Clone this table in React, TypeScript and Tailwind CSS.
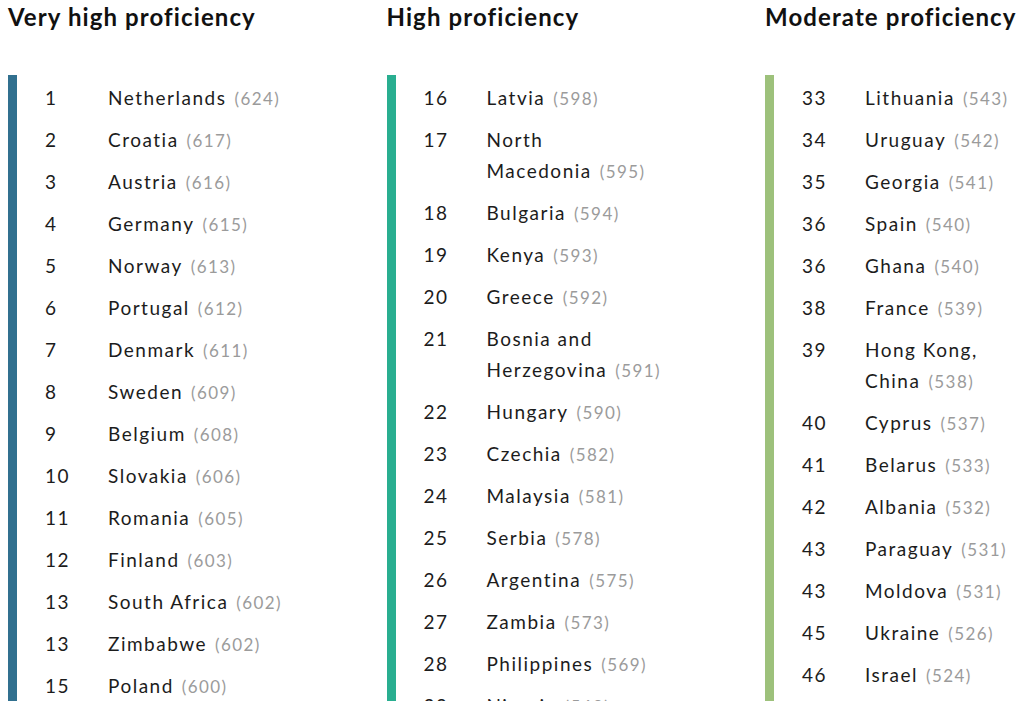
import React from "react";

type Row = { rank: string; name: string[]; score: string };

const col1: Row[] = [
  { rank: "1", name: ["Netherlands"], score: "624" },
  { rank: "2", name: ["Croatia"], score: "617" },
  { rank: "3", name: ["Austria"], score: "616" },
  { rank: "4", name: ["Germany"], score: "615" },
  { rank: "5", name: ["Norway"], score: "613" },
  { rank: "6", name: ["Portugal"], score: "612" },
  { rank: "7", name: ["Denmark"], score: "611" },
  { rank: "8", name: ["Sweden"], score: "609" },
  { rank: "9", name: ["Belgium"], score: "608" },
  { rank: "10", name: ["Slovakia"], score: "606" },
  { rank: "11", name: ["Romania"], score: "605" },
  { rank: "12", name: ["Finland"], score: "603" },
  { rank: "13", name: ["South Africa"], score: "602" },
  { rank: "13", name: ["Zimbabwe"], score: "602" },
  { rank: "15", name: ["Poland"], score: "600" },
];

const col2: Row[] = [
  { rank: "16", name: ["Latvia"], score: "598" },
  { rank: "17", name: ["North", "Macedonia"], score: "595" },
  { rank: "18", name: ["Bulgaria"], score: "594" },
  { rank: "19", name: ["Kenya"], score: "593" },
  { rank: "20", name: ["Greece"], score: "592" },
  { rank: "21", name: ["Bosnia and", "Herzegovina"], score: "591" },
  { rank: "22", name: ["Hungary"], score: "590" },
  { rank: "23", name: ["Czechia"], score: "582" },
  { rank: "24", name: ["Malaysia"], score: "581" },
  { rank: "25", name: ["Serbia"], score: "578" },
  { rank: "26", name: ["Argentina"], score: "575" },
  { rank: "27", name: ["Zambia"], score: "573" },
  { rank: "28", name: ["Philippines"], score: "569" },
  { rank: "29", name: ["Nigeria"], score: "568" },
];

const col3: Row[] = [
  { rank: "33", name: ["Lithuania"], score: "543" },
  { rank: "34", name: ["Uruguay"], score: "542" },
  { rank: "35", name: ["Georgia"], score: "541" },
  { rank: "36", name: ["Spain"], score: "540" },
  { rank: "36", name: ["Ghana"], score: "540" },
  { rank: "38", name: ["France"], score: "539" },
  { rank: "39", name: ["Hong Kong,", "China"], score: "538" },
  { rank: "40", name: ["Cyprus"], score: "537" },
  { rank: "41", name: ["Belarus"], score: "533" },
  { rank: "42", name: ["Albania"], score: "532" },
  { rank: "43", name: ["Paraguay"], score: "531" },
  { rank: "43", name: ["Moldova"], score: "531" },
  { rank: "45", name: ["Ukraine"], score: "526" },
  { rank: "46", name: ["Israel"], score: "524" },
  { rank: "47", name: ["Russia"], score: "524" },
];

function Column({ title, rows, bar }: { title: string; rows: Row[]; bar: string }) {
  return (
    <div className="flex w-[378.5px] shrink-0 flex-col">
      <h2 className="pt-[1px] text-[24px] font-bold leading-[32px] tracking-[1.1px] text-[#111]">{title}</h2>
      <div className={`mt-[42px] flex-1 border-l-[9px] pt-px ${bar}`}>
        {rows.map((r, i) => (
          <div key={i} className="flex py-[5.5px] text-[19px] leading-[31px] tracking-[1.5px] text-[#1c1c1c]">
            <div className="ml-[28px] w-[63px] shrink-0">{r.rank}</div>
            <div className="flex-1">
              {r.name.map((line, j) => (
                <div key={j}>
                  {line}
                  {j === r.name.length - 1 && (
                    <span className="ml-[8px] text-[17px] leading-none tracking-[1.4px] text-[#9b9b9b]">
                      ({r.score})
                    </span>
                  )}
                </div>
              ))}
            </div>
          </div>
        ))}
      </div>
    </div>
  );
}

export default function App() {
  return (
    <div
      className="flex h-[701px] w-[1024px] overflow-hidden bg-white pl-2"
      style={{ fontFamily: "Lato, 'Noto Sans', sans-serif" }}
    >
      <Column title="Very high proficiency" rows={col1} bar="border-[#31708f]" />
      <Column title="High proficiency" rows={col2} bar="border-[#29ae90]" />
      <Column title="Moderate proficiency" rows={col3} bar="border-[#9dc17b]" />
    </div>
  );
}
